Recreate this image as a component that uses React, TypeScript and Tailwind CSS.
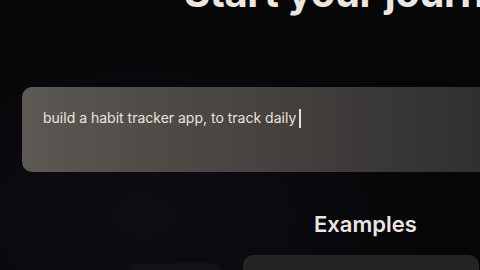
export default function App() {
  const prompt = "build a habit tracker app, to track daily"

  return (
    <div
      className="w-[480px] h-[270px] overflow-hidden bg-[radial-gradient(ellipse_at_30%_80%,#0d0d14_0%,#060607_70%)] text-[#ece7e3]"
      style={{ fontFamily: "Inter, 'Liberation Sans', sans-serif" }}
    >
      {/* Heading, cut off by the top of the frame */}
      <div className="h-[16px] overflow-hidden">
        <h1 className="-mt-[27px] pl-[184px] whitespace-nowrap text-[40px] leading-[40px] font-bold tracking-[-0.3px] text-[#ebe6e2]">
          Start your journey
        </h1>
      </div>

      {/* Prompt input */}
      <div className="mt-[71px] ml-[22px] w-[480px] h-[85px] rounded-l-[10px] bg-gradient-to-r from-[#5c5853] via-[#45423f] to-[#2f2e2d] pl-[21px] pt-[21px]">
        <div className="flex items-center text-[14px] leading-[20px] text-[#ebe3de]">
          <span>{prompt}</span>
          <span className="ml-[3px] w-[2px] h-[19px] bg-[#e6e0dc]" />
        </div>
      </div>

      {/* Examples */}
      <div className="mt-[38px] pl-[314px]">
        <h2 className="text-[22px] leading-[28px] font-semibold text-[#ebe6e2] whitespace-nowrap">Examples</h2>
      </div>

      <div className="mt-[17px] flex items-start">
        <div className="ml-[128px] mt-[8px] w-[92px] h-[20px] rounded-t-[8px] bg-[#121214]" />
        <div className="ml-[23px] w-[236px] h-[20px] rounded-t-[10px] bg-[#242425]" />
      </div>
    </div>
  )
}
